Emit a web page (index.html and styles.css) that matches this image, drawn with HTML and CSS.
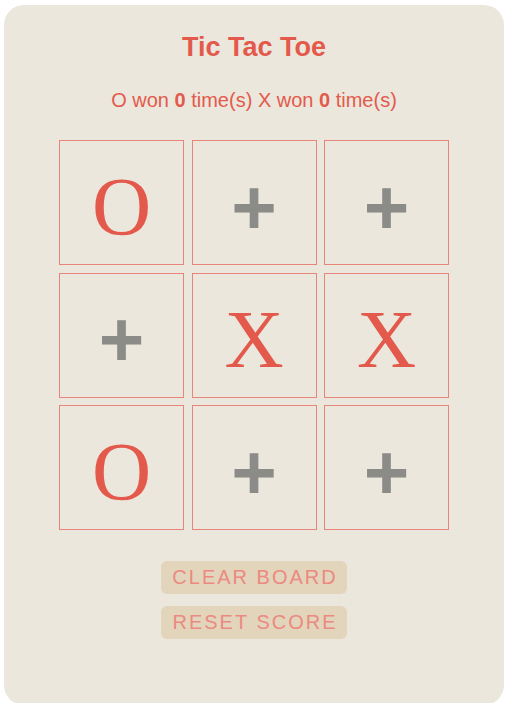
FILE: index.html
```html
<!DOCTYPE html>
<html>
<head>
<meta charset="utf-8">
<link rel="stylesheet" href="styles.css">
</head>
<body>
<div class="card">
  <h1 class="title">Tic Tac Toe</h1>
  <p class="score"><span class="tally">O won <b>0</b> time(s)</span> <span class="tally">X won <b>0</b> time(s)</span></p>
  <div class="board">
    <div class="cell mark">O</div>
    <div class="cell empty">+</div>
    <div class="cell empty">+</div>
    <div class="cell empty">+</div>
    <div class="cell mark">X</div>
    <div class="cell mark">X</div>
    <div class="cell mark">O</div>
    <div class="cell empty">+</div>
    <div class="cell empty">+</div>
  </div>
  <div class="actions">
    <button class="btn">CLEAR BOARD</button>
    <button class="btn">RESET SCORE</button>
  </div>
</div>
</body>
</html>
```
FILE: styles.css
```css
html, body {
  margin: 0;
  padding: 0;
  background: #ffffff;
}
body {
  font-family: "Liberation Sans", Arial, sans-serif;
}
.card {
  box-sizing: border-box;
  width: 500px;
  height: 700px;
  margin: 5px 0 0 4px;
  padding-top: 27px;
  background: #ebe7dc;
  border-radius: 20px;
  display: flex;
  flex-direction: column;
  align-items: center;
}
.title {
  margin: 0;
  font-size: 27px;
  line-height: 31px;
  font-weight: bold;
  color: #e35a4c;
}
.score {
  margin: 26px 0 0 0;
  font-size: 20px;
  line-height: 23px;
  color: #e35a4c;
}
.board {
  margin-top: 28px;
  display: grid;
  grid-template-columns: repeat(3, 125px);
  grid-auto-rows: 125px;
  gap: 7.5px;
}
.cell {
  box-sizing: border-box;
  border: 1px solid #e8857b;
  display: flex;
  align-items: center;
  justify-content: center;
}
.mark {
  font-family: "Liberation Serif", "Times New Roman", serif;
  font-size: 82px;
  color: #e35a4c;
  padding-top: 9px;
}
.empty {
  font-family: "Liberation Sans", Arial, sans-serif;
  font-weight: bold;
  font-size: 78px;
  color: #8b8b87;
  padding-top: 9px;
}
.actions {
  margin-top: 31px;
  display: flex;
  flex-direction: column;
  gap: 12px;
}
.btn {
  width: 186px;
  height: 33px;
  padding: 0;
  border: none;
  border-radius: 6px;
  background: #e3d4bc;
  color: #eb8a80;
  font-family: "Liberation Sans", Arial, sans-serif;
  font-size: 20px;
  letter-spacing: 2px;
  text-indent: 2px;
}
```
